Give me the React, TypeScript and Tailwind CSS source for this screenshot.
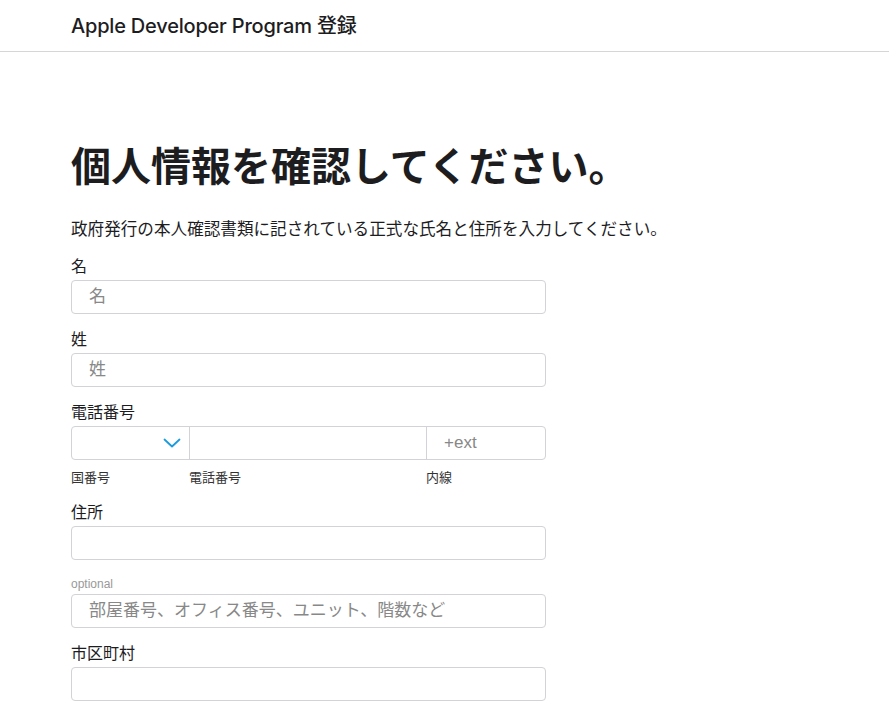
const jp = "font-['Helvetica_Neue','Liberation_Sans','Noto_Sans_CJK_JP',sans-serif]";

function Field({ label, placeholder }: { label: string; placeholder?: string }) {
  return (
    <div className="flex flex-col">
      <label className="h-[26px] pt-[2px] text-[16px] leading-[22px] text-[#1d1d1f]">{label}</label>
      <input
        placeholder={placeholder}
        className="h-[34px] w-[475px] rounded-[4px] border border-[#d2d2d7] bg-white px-[17px] text-[17px] text-[#333] placeholder:text-[#888] focus:outline-none"
      />
    </div>
  );
}

export default function App() {
  return (
    <div className={`min-h-screen bg-white text-[#1d1d1f] ${jp}`}>
      <header className="h-[52px] border-b border-[#d6d6d6]">
        <div className="flex h-[51px] items-center pl-[71px] font-['Inter','Noto_Sans_CJK_JP',sans-serif] text-[20px] font-medium tracking-[-0.2px] text-[#1d1d1f]">
          Apple Developer Program 登録
        </div>
      </header>
      <main className="pl-[71px]">
        <h1 className="mt-[92px] text-[40px] font-bold leading-[46px] text-[#1d1d1f]">
          個人情報を確認してください。
        </h1>
        <p className="mt-[28px] text-[16.6px] leading-[24px] text-[#1d1d1f]">
          政府発行の本人確認書類に記されている正式な氏名と住所を入力してください。
        </p>
        <div className="mt-[12px] flex flex-col gap-[13px]">
          <Field label="名" placeholder="名" />
          <Field label="姓" placeholder="姓" />
          <div className="flex flex-col">
            <label className="h-[26px] pt-[2px] text-[16px] leading-[22px]">電話番号</label>
            <div className="flex h-[34px] w-[475px] rounded-[4px] border border-[#d2d2d7]">
              <div className="flex w-[118px] items-center justify-end border-r border-[#d2d2d7] pr-[8px]">
                <svg width="18" height="10" viewBox="0 0 18 10" fill="none">
                  <path d="M1.5 1.5 L9 8.5 L16.5 1.5" stroke="#1a9bdf" strokeWidth="1.8" strokeLinecap="round" strokeLinejoin="round" />
                </svg>
              </div>
              <input className="w-[237px] border-r border-[#d2d2d7] px-3 focus:outline-none" />
              <input
                placeholder="+ext"
                className="w-[118px] rounded-r-[4px] px-[17px] text-[17px] placeholder:text-[#888] focus:outline-none"
              />
            </div>
            <div className="flex pt-[9px] text-[13px] leading-[18px] text-[#333]">
              <span className="w-[118px]">国番号</span>
              <span className="w-[237px]">電話番号</span>
              <span>内線</span>
            </div>
          </div>
          <div className="mt-0">
            <Field label="住所" />
          </div>
          <div className="-mt-[3px] flex flex-col">
            <span className="h-[24px] pt-[7px] text-[12px] leading-[14px] text-[#999]">optional</span>
            <input
              placeholder="部屋番号、オフィス番号、ユニット、階数など"
              className="h-[34px] w-[475px] rounded-[4px] border border-[#d2d2d7] px-[17px] text-[17px] placeholder:text-[#888] focus:outline-none"
            />
          </div>
          <div className="mt-0">
            <Field label="市区町村" />
          </div>
        </div>
      </main>
    </div>
  );
}
